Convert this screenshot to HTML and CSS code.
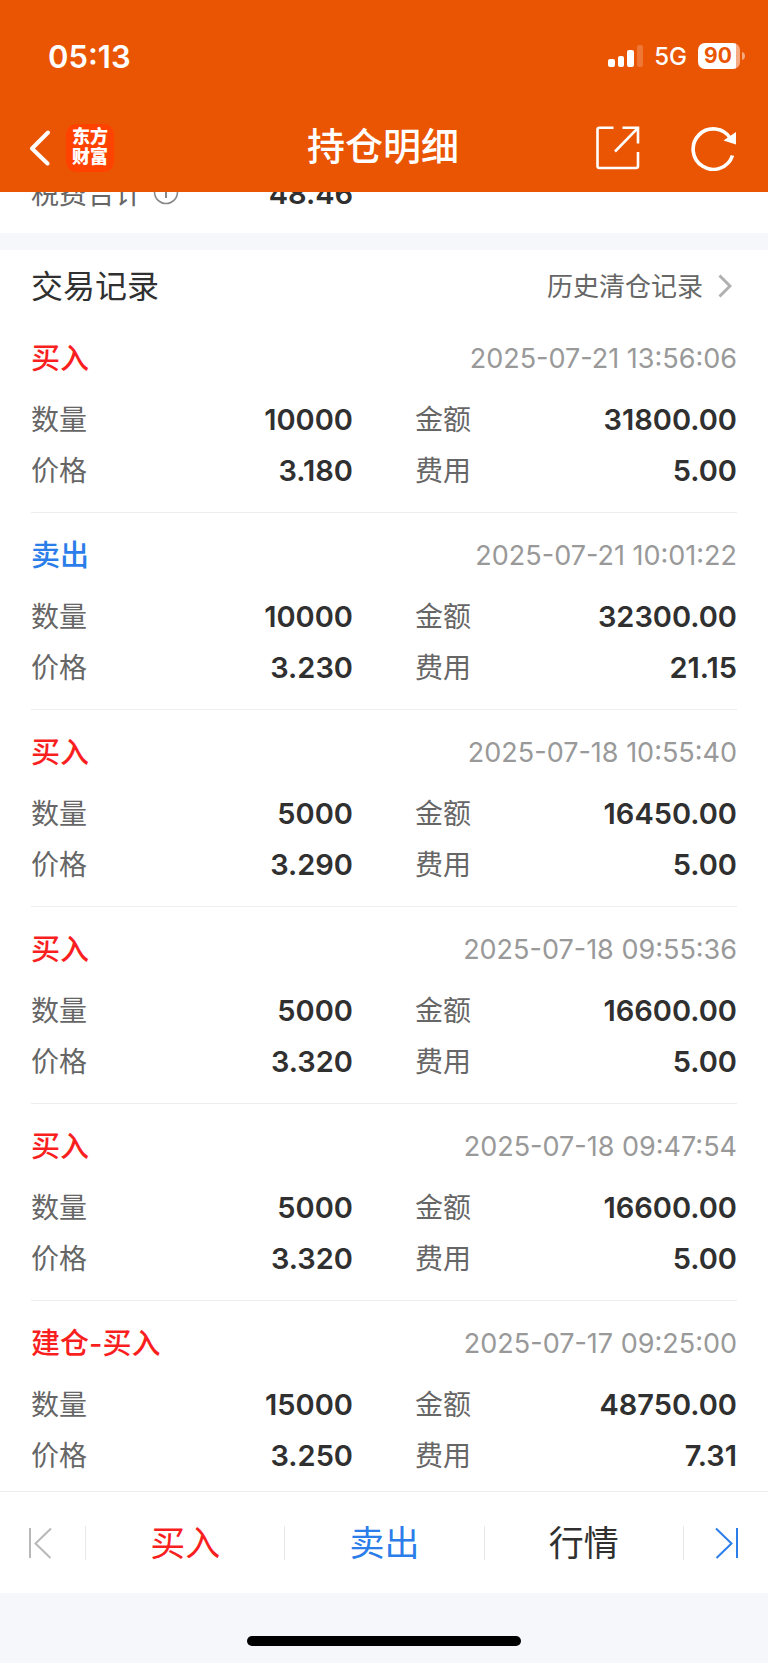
FILE: index.html
```html
<!DOCTYPE html>
<html lang="zh-CN">
<head>
    <meta charset="UTF-8">
    <meta name="viewport" content="width=device-width, initial-scale=1.0">
    <title>持仓明细</title>
    <link rel="stylesheet" href="styles.css">
</head>
<body>
    <header class="header">
        <div class="status-bar">
            <span class="time">05:13</span>
            <div class="status-icons">
                <svg class="signal" width="36" height="22" viewBox="0 0 36 22" fill="#fff">
                    <rect x="0" y="14" width="7" height="8" rx="2"/>
                    <rect x="10" y="11" width="6" height="11" rx="2"/>
                    <rect x="19" y="5" width="7" height="17" rx="2"/>
                    <rect x="29" y="0" width="6" height="22" rx="2" opacity="0.2"/>
                </svg>
                <span class="network">5G</span>
                <div class="battery">90</div>
                <svg class="battery-tip" width="4" height="8" viewBox="0 0 4 8"><path d="M0 0c4 1 4 7 0 8z" fill="#fff" opacity="0.5"/></svg>
            </div>
        </div>
        <nav class="nav">
            <div class="nav-left">
                <button class="icon-btn" aria-label="返回">
                    <svg width="22" height="36" viewBox="0 0 22 36" fill="none" stroke="#fff" stroke-width="4" stroke-linecap="round" stroke-linejoin="round"><path d="M19 2.500L3 18.500L18.500 33.500"/></svg>
                </button>
                <a href="#" class="logo">东方<br>财富</a>
            </div>
            <h1>持仓明细</h1>
            <div class="nav-right">
                <button class="icon-btn" aria-label="分享">
                    <svg width="44" height="44" viewBox="0 0 44 44" fill="none" stroke="#fff" stroke-width="2.600">
                        <path d="M17.500 1.800H3.500Q1.500 1.800 1.500 3.800V40Q1.500 42 3.500 42H40Q42 42 42 40V26"/>
                        <path d="M26.500 1.800H42V17.500M42 1.800L19 25.500"/>
                    </svg>
                </button>
                <button class="icon-btn" aria-label="刷新">
                    <svg width="46" height="46" viewBox="0 0 46 46" fill="none" stroke="#fff" stroke-width="3.600">
                        <path d="M41.500 30.500A20.200 20.200 0 1 1 39.500 13.500"/>
                        <path d="M45 7V19.500L32.500 15.500z" fill="#fff" stroke="none"/>
                    </svg>
                </button>
            </div>
        </nav>
    </header>

    <main class="content">
        <section class="summary">
            <dl class="fields">
                <div class="field">
                    <dt>税费合计
                        <svg class="info" width="26" height="26" viewBox="0 0 26 26" fill="none" stroke="#888" stroke-width="1.600"><circle cx="13" cy="13" r="11.500"/><path d="M13 11v8M13 6.500v2" stroke-width="2"/></svg>
                    </dt>
                    <dd>48.46</dd>
                </div>
            </dl>
        </section>

        <section class="records">
            <div class="section-head">
                <h2>交易记录</h2>
                <a href="#" class="history"><span>历史清仓记录</span>
                    <svg width="14" height="24" viewBox="0 0 14 24" fill="none" stroke="#b0b0b0" stroke-width="3"><path d="M1.500 1.500L12 12L1.500 22.500"/></svg>
                </a>
            </div>

            <article class="record">
                <div class="record-head"><h3 class="buy">买入</h3><time>2025-07-21 13:56:06</time></div>
                <dl class="fields">
                    <div class="field"><dt>数量</dt><dd>10000</dd></div>
                    <div class="field"><dt>金额</dt><dd>31800.00</dd></div>
                    <div class="field"><dt>价格</dt><dd>3.180</dd></div>
                    <div class="field"><dt>费用</dt><dd>5.00</dd></div>
                </dl>
            </article>

            <article class="record">
                <div class="record-head"><h3 class="sell">卖出</h3><time>2025-07-21 10:01:22</time></div>
                <dl class="fields">
                    <div class="field"><dt>数量</dt><dd>10000</dd></div>
                    <div class="field"><dt>金额</dt><dd>32300.00</dd></div>
                    <div class="field"><dt>价格</dt><dd>3.230</dd></div>
                    <div class="field"><dt>费用</dt><dd>21.15</dd></div>
                </dl>
            </article>

            <article class="record">
                <div class="record-head"><h3 class="buy">买入</h3><time>2025-07-18 10:55:40</time></div>
                <dl class="fields">
                    <div class="field"><dt>数量</dt><dd>5000</dd></div>
                    <div class="field"><dt>金额</dt><dd>16450.00</dd></div>
                    <div class="field"><dt>价格</dt><dd>3.290</dd></div>
                    <div class="field"><dt>费用</dt><dd>5.00</dd></div>
                </dl>
            </article>

            <article class="record">
                <div class="record-head"><h3 class="buy">买入</h3><time>2025-07-18 09:55:36</time></div>
                <dl class="fields">
                    <div class="field"><dt>数量</dt><dd>5000</dd></div>
                    <div class="field"><dt>金额</dt><dd>16600.00</dd></div>
                    <div class="field"><dt>价格</dt><dd>3.320</dd></div>
                    <div class="field"><dt>费用</dt><dd>5.00</dd></div>
                </dl>
            </article>

            <article class="record">
                <div class="record-head"><h3 class="buy">买入</h3><time>2025-07-18 09:47:54</time></div>
                <dl class="fields">
                    <div class="field"><dt>数量</dt><dd>5000</dd></div>
                    <div class="field"><dt>金额</dt><dd>16600.00</dd></div>
                    <div class="field"><dt>价格</dt><dd>3.320</dd></div>
                    <div class="field"><dt>费用</dt><dd>5.00</dd></div>
                </dl>
            </article>

            <article class="record">
                <div class="record-head"><h3 class="buy">建仓-买入</h3><time>2025-07-17 09:25:00</time></div>
                <dl class="fields">
                    <div class="field"><dt>数量</dt><dd>15000</dd></div>
                    <div class="field"><dt>金额</dt><dd>48750.00</dd></div>
                    <div class="field"><dt>价格</dt><dd>3.250</dd></div>
                    <div class="field"><dt>费用</dt><dd>7.31</dd></div>
                </dl>
            </article>
        </section>
    </main>

    <footer class="footer">
        <div class="toolbar">
            <button class="tool" aria-label="上一个">
                <svg width="24" height="32" viewBox="0 0 24 32" fill="none" stroke="#b8b8b8" stroke-width="2"><path d="M2 1V31"/><path d="M23 1.500L7.500 16.500L22.500 31"/></svg>
            </button>
            <button class="tool buy"><span>买入</span></button>
            <button class="tool sell"><span>卖出</span></button>
            <button class="tool"><span>行情</span></button>
            <button class="tool" aria-label="下一个">
                <svg width="24" height="32" viewBox="0 0 24 32" fill="none" stroke="#2b7de9" stroke-width="2"><path d="M22 1V31"/><path d="M1 1.500L16.500 16.500L1.500 31"/></svg>
            </button>
        </div>
        <div class="home-area"><div class="home-indicator"></div></div>
    </footer>
</body>
</html>
```
FILE: styles.css
```css
* {
    box-sizing: border-box;
    margin: 0;
    padding: 0;
}
body {
    display: flex;
    flex-direction: column;
    height: 100vh;
    font-family: Inter, "Noto Sans CJK SC", sans-serif;
    font-size: 28px;
    color: #303030;
    background: #fff;
}
button {
    border: none;
    background: none;
    font: inherit;
    color: inherit;
    cursor: pointer;
}
a {
    color: inherit;
    text-decoration: none;
}
svg {
    display: block;
    flex: none;
}
.buy { color: #f91f1f; }
.sell { color: #2b7de9; }

/* Chinese glyphs sit low in the line box */
h1,
h2,
h3,
dt,
.history span,
.tool span {
    padding-bottom: 4px;
}

/* header */
.header {
    flex: none;
    background: #ea5504;
    color: #fff;
}
.status-bar {
    display: flex;
    justify-content: space-between;
    align-items: center;
    height: 104px;
    padding: 8px 22px 0 48px;
}
.time {
    font-size: 31px;
    font-weight: 600;
}
.status-icons {
    display: flex;
    align-items: center;
}
.network {
    margin: 0 11px 0 10px;
    font-size: 24px;
    font-weight: 500;
}
.battery {
    width: 42px;
    height: 26px;
    margin-right: 2px;
    padding-right: 2px;
    border-radius: 7px;
    background: linear-gradient(to right, #fff 90%, #f5aa82 90%);
    color: #ea5504;
    font-size: 21px;
    font-weight: 700;
    line-height: 26px;
    text-align: center;
}
.nav {
    display: grid;
    grid-template-columns: 1fr auto 1fr;
    align-items: center;
    height: 88px;
    padding: 0 31px 0 29px;
}
.nav h1 {
    font-size: 38px;
    font-weight: 500;
    line-height: 56px;
}
.nav-left,
.nav-right {
    display: flex;
    align-items: center;
}
.nav-left {
    gap: 15px;
}
.nav-right {
    justify-content: flex-end;
    gap: 51px;
}
.logo {
    width: 48px;
    height: 48px;
    padding-top: 3px;
    border-radius: 10px;
    background: #ff4200;
    font-size: 18px;
    font-weight: 900;
    line-height: 20px;
    text-align: center;
}

/* content, scrolled under the header */
.content {
    flex: 1;
    min-height: 0;
    overflow: hidden;
}
.summary {
    margin-top: -24px;
    padding: 0 31px 14px;
}
.fields {
    display: grid;
    grid-template-columns: 1fr 1fr;
    column-gap: 62px;
}
.field {
    display: flex;
    justify-content: space-between;
    align-items: center;
    height: 51px;
}
.field dt {
    display: flex;
    align-items: center;
    gap: 10px;
    color: #666;
}
.field dd {
    font-size: 29px;
    font-weight: 600;
}
.records {
    padding: 6px 31px 0;
    border-top: 17px solid #f6f7fa;
}
.section-head {
    display: flex;
    justify-content: space-between;
    align-items: center;
    height: 60px;
}
.section-head h2 {
    font-size: 32px;
    font-weight: 400;
}
.history {
    display: flex;
    align-items: center;
    gap: 15px;
    padding-right: 5px;
    color: #666;
    font-size: 26px;
}
.record {
    padding: 20px 0 16px;
    border-bottom: 1px solid #eee;
}
.record-head {
    display: flex;
    justify-content: space-between;
    align-items: center;
    height: 44px;
    margin-bottom: 14px;
}
.record-head h3 {
    font-size: 29px;
    font-weight: 500;
}
.record-head time {
    color: #999;
    font-size: 27px;
}

/* bottom toolbar */
.footer {
    flex: none;
    background: #f6f7fa;
}
.toolbar {
    display: grid;
    grid-template-columns: 85px 1fr 1fr 1fr 85px;
    align-items: center;
    height: 102px;
    border-top: 1px solid #eee;
    background: #fff;
}
.tool {
    display: flex;
    justify-content: center;
    align-items: center;
    height: 34px;
    font-size: 35px;
}
.tool + .tool {
    border-left: 1px solid #e8e8e8;
}
.tool:first-child {
    padding-right: 5px;
}
.tool:last-child {
    padding-left: 3px;
}
.home-area {
    display: flex;
    justify-content: center;
    align-items: flex-end;
    height: 70px;
    padding-bottom: 17px;
}
.home-indicator {
    width: 274px;
    height: 10px;
    border-radius: 5px;
    background: #000;
}
```
